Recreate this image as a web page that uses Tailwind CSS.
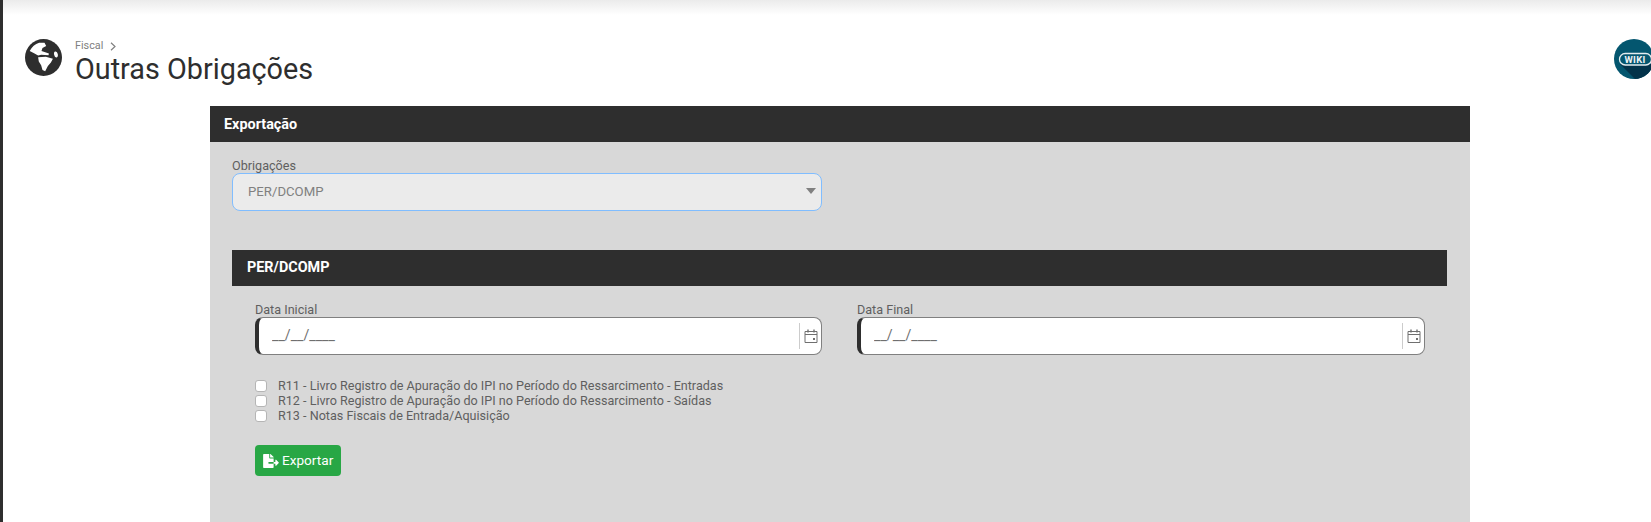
<!DOCTYPE html>
<html lang="pt-BR">
<head>
    <meta charset="UTF-8">
    <title>Outras Obrigações</title>
    <script src="https://cdn.jsdelivr.net/npm/@tailwindcss/browser@4"></script>
</head>
<body class="h-[522px] overflow-hidden bg-white font-['Roboto',sans-serif] border-l-[3px] border-[#2e2e2e]">
    <!-- sombra da barra superior -->
    <div class="h-[15px] bg-gradient-to-b from-[#ebebeb] to-white"></div>

    <!-- cabeçalho -->
    <div class="flex items-start h-[91px] pt-[24px] pl-[22px]">
        <svg class="w-[37px] h-[37px] mr-[13px] shrink-0" viewBox="0 0 110 110">
            <circle cx="55" cy="55" r="55" fill="#2e2e2e"/>
            <path fill="#fff" d="M14 36C20 23 30 15 42 11L58 11 63 21 52 27 49 36 58 39 71 43 70 48 48 47 39 49 27 42Z"/>
            <path fill="#fff" d="M39 54 62 53 83 59 77 70 68 80 60 96 52 92 48 78 41 67Z"/>
            <ellipse cx="92" cy="46" rx="5.5" ry="9" transform="rotate(-12 92 46)" fill="#fff"/>
        </svg>
        <div class="flex-1">
            <div class="flex items-center h-[14px] text-[10.8px] text-[#808080]">
                Fiscal
                <svg class="w-[6px] h-[9px] ml-[7px]" viewBox="0 0 6 9" fill="none" stroke="#808080" stroke-width="1.2"><path d="M1 .7 5 4.5 1 8.3"/></svg>
            </div>
            <h1 class="text-[28.8px] leading-[32px] text-[#2e2e2e]">Outras Obrigações</h1>
        </div>
        <!-- botão wiki -->
        <div class="relative w-[37px] h-[40px] shrink-0 overflow-hidden">
            <svg class="absolute left-0 top-0 w-[40px] h-[40px]" viewBox="0 0 40 40">
                <defs><clipPath id="c"><circle cx="20" cy="20" r="20"/></clipPath></defs>
                <circle cx="20" cy="20" r="20" fill="#04566f"/>
                <path clip-path="url(#c)" d="M6 25 38 25 42 42 23 42z" fill="#03334a"/>
                <rect x="5.5" y="14.5" width="32" height="11.5" rx="5.7" fill="#04566f" stroke="#e3ecef" stroke-width="1.3"/>
                <text x="21" y="23.5" text-anchor="middle" font-family="Roboto" font-weight="700" font-size="9.5" letter-spacing=".3" fill="#eef3f5">WIKI</text>
            </svg>
        </div>
    </div>

    <!-- painel -->
    <div class="ml-[207px] w-[1260px] h-[416px] bg-[#d8d8d8]">
        <div class="h-[36px] bg-[#2e2e2e] pl-[14px] pt-[1px] flex items-center text-[14.4px] font-bold text-white">Exportação</div>

        <div class="pl-[22px] pr-[23px]">
            <div class="pt-[16px] w-[590px]">
                <label class="block h-[15px] text-[12.6px] leading-[15px] text-[#5f5f5f]">Obrigações</label>
                <div class="relative">
                    <select disabled class="block w-full h-[38px] appearance-none rounded-[8px] border border-[#80bdff] bg-[#ebebeb] pl-[15px] text-[13.2px] text-[#808080] opacity-100">
                        <option>PER/DCOMP</option>
                    </select>
                    <span class="absolute right-[5px] top-[15px] w-0 h-0 mr-[1px] border-x-[5.5px] border-x-transparent border-t-[6px] border-t-[#808080]"></span>
                </div>
            </div>

            <div class="mt-[39px] h-[36px] bg-[#2e2e2e] pl-[15px] flex items-center text-[14.4px] font-bold text-white">PER/DCOMP</div>

            <div class="px-[23px]">
                <div class="flex gap-[35px] pt-[16px] w-[1170px]">
                    <div class="w-[567px]">
                        <label class="block h-[15px] text-[12.6px] leading-[15px] text-[#5f5f5f]">Data Inicial</label>
                        <div class="flex items-center h-[38px] rounded-[8px] border border-[#808080] border-l-[4px] border-l-[#2e2e2e] bg-white">
                            <input type="text" value="__/__/____" class="flex-1 min-w-0 pl-[13px] text-[14.2px] text-[#6f6f6f] outline-none bg-transparent">
                            <div class="h-[26px] border-l border-[#cccccc] w-[22px] flex items-center justify-center">
                                <svg class="w-[14px] h-[14px] ml-[1px]" viewBox="0 0 14 14" fill="none" stroke="#6f6f6f"><path d="M1 2.5h12v11H1zM1 5.5h12" /><path d="M4 .5v3M10 .5v3" stroke-width="1.4"/><rect x="9" y="9" width="2" height="2" fill="#6f6f6f" stroke="none"/></svg>
                            </div>
                        </div>
                    </div>
                    <div class="w-[568px]">
                        <label class="block h-[15px] text-[12.6px] leading-[15px] text-[#5f5f5f]">Data Final</label>
                        <div class="flex items-center h-[38px] rounded-[8px] border border-[#808080] border-l-[4px] border-l-[#2e2e2e] bg-white">
                            <input type="text" value="__/__/____" class="flex-1 min-w-0 pl-[13px] text-[14.2px] text-[#6f6f6f] outline-none bg-transparent">
                            <div class="h-[26px] border-l border-[#cccccc] w-[22px] flex items-center justify-center">
                                <svg class="w-[14px] h-[14px] ml-[1px]" viewBox="0 0 14 14" fill="none" stroke="#6f6f6f"><path d="M1 2.5h12v11H1zM1 5.5h12" /><path d="M4 .5v3M10 .5v3" stroke-width="1.4"/><rect x="9" y="9" width="2" height="2" fill="#6f6f6f" stroke="none"/></svg>
                            </div>
                        </div>
                    </div>
                </div>

                <div class="mt-[23px] text-[12.6px] leading-[15px] text-[#5f5f5f]">
                    <label class="flex items-center h-[15px]"><input type="checkbox" class="appearance-none w-[12px] h-[12px] rounded-[3px] border border-[#b5b5b5] bg-white mr-[11px]">R11 - Livro Registro de Apuração do IPI no Período do Ressarcimento - Entradas</label>
                    <label class="flex items-center h-[15px]"><input type="checkbox" class="appearance-none w-[12px] h-[12px] rounded-[3px] border border-[#b5b5b5] bg-white mr-[11px]">R12 - Livro Registro de Apuração do IPI no Período do Ressarcimento - Saídas</label>
                    <label class="flex items-center h-[15px]"><input type="checkbox" class="appearance-none w-[12px] h-[12px] rounded-[3px] border border-[#b5b5b5] bg-white mr-[11px]">R13 - Notas Fiscais de Entrada/Aquisição</label>
                </div>

                <button class="mt-[22px] flex items-center w-[86px] h-[31px] pl-[8px] rounded-[4px] bg-[#28a745] text-[13.6px] text-white">
                    <svg class="w-[16px] h-[14px] mr-[3px]" viewBox="0 0 576 512" fill="white"><path d="M384 121.9c0-6.3-2.5-12.4-7-16.9L279.1 7c-4.5-4.5-10.6-7-17-7H256v128h128zM571 308l-95.7-96.4c-10.1-10.1-27.4-3-27.4 11.3V288h-64v64h64v65.2c0 14.3 17.3 21.4 27.4 11.3L571 332c6.6-6.6 6.6-17.4 0-24zm-379 28v-32c0-8.8 7.2-16 16-16h176V160H248c-13.2 0-24-10.8-24-24V0H24C10.7 0 0 10.7 0 24v464c0 13.3 10.7 24 24 24h336c13.3 0 24-10.7 24-24V352H208c-8.8 0-16-7.2-16-16z"/></svg>
                    Exportar
                </button>
            </div>
        </div>
    </div>
</body>
</html>
